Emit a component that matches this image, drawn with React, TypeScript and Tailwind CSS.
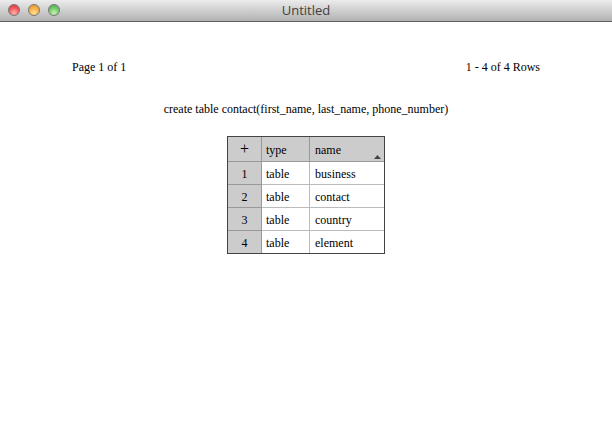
export default function App() {
  const rows = [
    ["1", "business"],
    ["2", "contact"],
    ["3", "country"],
    ["4", "element"],
  ];
  const dots = [
    "radial-gradient(circle at 50% 80%, #ffb4ac, #f2585a 55%, #d0383c)",
    "radial-gradient(circle at 50% 80%, #ffe29c, #f6ae40 55%, #d8922e)",
    "radial-gradient(circle at 50% 80%, #c8f2b4, #72c86a 55%, #4f9f4f)",
  ];
  return (
    <div className="w-[612px] h-[442px] bg-white overflow-hidden flex flex-col font-['Liberation_Serif',serif] text-[12px] text-black">
      <div className="h-[22px] shrink-0 relative flex items-center justify-center border-b border-[#5f5f5f] bg-gradient-to-b from-[#ececec] to-[#b2b2b2]">
        <div className="absolute left-[8px] top-[4px] flex gap-[8px]">
          {dots.map((d, i) => (
            <div key={i} className="w-[12px] h-[12px] rounded-full border border-[#777]" style={{ background: d }} />
          ))}
        </div>
        <span className="font-['Open_Sans',sans-serif] text-[13px] font-medium text-[#3f3f3f]">Untitled</span>
      </div>
      <div className="flex justify-between pl-[72px] pr-[72px] pt-[38px] leading-[14px]">
        <span>Page 1 of 1</span>
        <span><span className="text-[#2a0000]">1</span> - 4 of 4 Rows</span>
      </div>
      <div className="text-center pt-[28px] leading-[14px]">create table contact(first_name, last_name, phone_number)</div>
      <div className="flex justify-center pt-[20px]">
        <div className="border border-[#444]">
          <table className="table-fixed w-[156px] border-separate border-spacing-0 leading-[14px]">
            <thead>
              <tr className="h-[25px] bg-[#cccccc]">
                <th className="w-[34px] p-0 font-normal text-[16px] text-center border-r border-b border-[#999]">+</th>
                <th className="w-[48px] p-0 pl-[4px] pt-[1px] font-normal text-left border-r border-b border-[#999]">type</th>
                <th className="w-[74px] p-0 pl-[5px] pt-[1px] font-normal text-left border-b border-[#999] relative">
                  name
                  <svg className="absolute right-[3px] bottom-[2px]" width="7" height="4" viewBox="0 0 7 4"><polygon points="3.5,0 7,4 0,4" fill="#444" /></svg>
                </th>
              </tr>
            </thead>
            <tbody>
              {rows.map(([n, name], i) => {
                const last = i === 3;
                return (
                  <tr key={n} className={last ? "h-[22px]" : "h-[23px]"}>
                    <td className={last ? "p-0 pt-[2px] bg-[#cccccc] text-center border-r border-[#999]" : "p-0 pt-[1px] bg-[#cccccc] text-center border-r border-b border-[#999]"}>{n}</td>
                    <td className={last ? "p-0 pl-[4px] pt-[2px] border-r border-[#bbb]" : "p-0 pl-[4px] pt-[1px] border-r border-b border-[#bbb]"}>table</td>
                    <td className={last ? "p-0 pl-[5px] pt-[2px]" : "p-0 pl-[5px] pt-[1px] border-b border-[#bbb]"}>{name}</td>
                  </tr>
                );
              })}
            </tbody>
          </table>
        </div>
      </div>
    </div>
  );
}
